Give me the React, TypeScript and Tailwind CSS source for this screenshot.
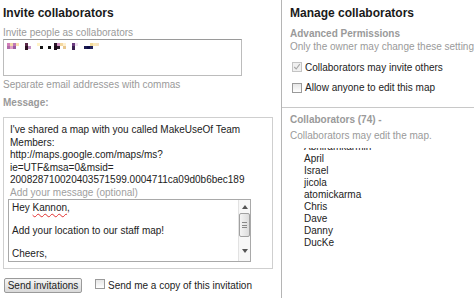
import React from "react";

const messageLines = [
  "I've shared a map with you called MakeUseOf Team",
  "Members:",
  "http://maps.google.com/maps/ms?",
  "ie=UTF&msa=0&msid=",
  "200828710020403571599.0004711ca09d0b6bec189",
];

const collaborators = ["Abhiramkarmin", "April", "Israel", "jicola", "atomickarma", "Chris", "Dave", "Danny", "DucKe", "Erin"];

// pixelated, redacted email address
const redacted: [number, number, number, number, string][] = [
  [2, 1, 3, 3, "#d27fb8"], [2, 4, 3, 3, "#b06aa8"], [5, 1, 3, 3, "#f2d9a8"], [5, 4, 3, 3, "#e0a0c8"], [8, 1, 3, 3, "#c078b8"], [8, 4, 3, 3, "#9a5aa0"], [11, 1, 3, 3, "#f8e0b0"],
  [20, 1, 3, 3, "#5a2848"], [20, 4, 3, 4, "#2a1020"], [23, 4, 3, 3, "#c090c0"],
  [32, 1, 3, 3, "#fff2c8"], [35, 4, 3, 3, "#151515"],
  [43, 4, 3, 3, "#101010"], [49, 1, 3, 3, "#2a1428"], [49, 4, 3, 4, "#1a0a18"], [52, 1, 3, 3, "#d090c0"], [52, 4, 3, 3, "#2a1a2a"], [55, 1, 3, 3, "#f4d8a0"], [58, 1, 3, 3, "#fff0d0"], [58, 4, 3, 3, "#e8c890"],
  [67, 1, 3, 3, "#6a3a80"], [67, 4, 3, 4, "#3a2050"], [70, 1, 3, 3, "#f0e0f0"],
  [79, 4, 3, 3, "#1a1a50"], [82, 4, 3, 3, "#0c0c48"], [85, 1, 3, 3, "#f0d898"], [85, 4, 3, 3, "#20205a"], [88, 1, 3, 3, "#fbe8b8"], [91, 1, 3, 3, "#f6e2c0"],
];

const Checkbox = ({ checked = false, disabled = false }: { checked?: boolean; disabled?: boolean }) => (
  <span
    className={`relative inline-block h-[10px] w-[10px] shrink-0 border ${
      disabled ? "border-[#c4c4c4] bg-[#f0f0f0]" : "border-[#9a9a9a] bg-gradient-to-b from-[#e6e6e6] to-white"
    }`}
  >
    {checked && (
      <svg viewBox="0 0 10 10" className="absolute left-0 top-0 h-[8px] w-[8px]">
        <path d="M1.5 5 L4 7.5 L8.5 1.5" fill="none" stroke="#a8a8a8" strokeWidth="1.4" />
      </svg>
    )}
  </span>
);

export default function App() {
  return (
    <div className="flex h-[298px] w-[474px] overflow-hidden bg-white font-['Liberation_Sans',Arial,sans-serif] text-[10px] text-[#333]">
      {/* invite */}
      <div className="w-[282px] shrink-0 border-r border-[#b5b5b5] pl-[3px]">
        <h2 className="pt-[6px] text-[12px] font-bold leading-[14px] text-[#1a1a1a]">Invite collaborators</h2>
        <p className="mt-[7px] leading-[12px] text-[#9a9a9a]">Invite people as collaborators</p>
        <div className="h-[37px] w-[239px] border border-[#bcbcbc] border-t-[#9a9a9a] pl-[1px] pt-[2px]">
          <svg width="96" height="9" viewBox="0 0 96 9">
            {redacted.map(([x, y, w, h, c], i) => (
              <rect key={i} x={x} y={y} width={w} height={h} fill={c} />
            ))}
          </svg>
        </div>
        <p className="mt-[3px] leading-[12px] text-[#9a9a9a]">Separate email addresses with commas</p>
        <p className="mt-[6px] font-bold leading-[12px] text-[#9a9a9a]">Message:</p>

        <div className="mt-[8px] h-[152px] w-[270px] border border-[#cfcfcf]">
          <div className="pl-[6px] pt-[6px] leading-[12.5px] text-[#222]">
            {messageLines.map((line) => (
              <div key={line} className="whitespace-nowrap">{line}</div>
            ))}
          </div>
          <p className="pl-[6px] leading-[12px] text-[#a0a0a0]">Add your message (optional)</p>
          <div className="ml-[4px] mt-[0.5px] flex h-[63px] w-[243px] border border-[#a9a9a9]">
            <div className="flex-1 pl-[3px] pt-[2px] leading-[11.5px] text-[#222]">
              <div>
                Hey <span className="underline decoration-[#e03030] decoration-wavy decoration-1 underline-offset-2">Kannon</span>,
              </div>
              <div>&nbsp;</div>
              <div>Add your location to our staff map!</div>
              <div>&nbsp;</div>
              <div>Cheers,</div>
            </div>
            <div className="flex w-[12px] flex-col items-center border-l border-[#e2e2e2] bg-[#f7f7f7]">
              <svg width="6" height="4" viewBox="0 0 6 4" className="mt-[5px]">
                <path d="M0 4 L3 0 L6 4 Z" fill="#555" />
              </svg>
              <div className="mt-[4px] flex h-[24px] w-[11px] flex-col items-center justify-center gap-[1.5px] rounded-[2px] border border-[#a0a0a0] bg-gradient-to-r from-[#f4f4f4] to-[#dcdcdc]">
                <span className="h-px w-[5px] bg-[#888]" />
                <span className="h-px w-[5px] bg-[#888]" />
                <span className="h-px w-[5px] bg-[#888]" />
              </div>
              <svg width="6" height="4" viewBox="0 0 6 4" className="mt-[12px]">
                <path d="M0 0 L3 4 L6 0 Z" fill="#555" />
              </svg>
            </div>
          </div>
        </div>

        <div className="mt-[9px] flex items-center">
          <button className="ml-[1px] h-[15px] w-[78px] rounded-[2px] border border-[#9a9a9a] bg-gradient-to-b from-[#f5f5f5] to-[#d9d9d9] text-[10px] leading-[13px] text-[#222]">
            Send invitations
          </button>
          <span className="ml-[13px]">
            <Checkbox />
          </span>
          <span className="ml-[3px] leading-[12px] text-[#222]">Send me a copy of this invitation</span>
        </div>
      </div>

      {/* manage */}
      <div className="flex-1">
        <div className="h-[108px] border-b border-[#c8c8c8] pl-[8px]">
          <h2 className="whitespace-nowrap pt-[6px] text-[12px] font-bold leading-[14px] text-[#1a1a1a]">Manage collaborators</h2>
          <p className="mt-[7px] whitespace-nowrap font-bold leading-[13px] text-[#9a9a9a]">Advanced Permissions</p>
          <p className="whitespace-nowrap leading-[13px] text-[#9a9a9a]">Only the owner may change these settings</p>
          <div className="ml-[2px] mt-[8px] flex h-[12px] items-center gap-[3px]">
            <Checkbox checked disabled />
            <span className="whitespace-nowrap text-[#222]">Collaborators may invite others</span>
          </div>
          <div className="ml-[2px] mt-[8.5px] flex h-[12px] items-center gap-[3px]">
            <Checkbox />
            <span className="whitespace-nowrap text-[#222]">Allow anyone to edit this map</span>
          </div>
        </div>
        <div className="pl-[8px]">
          <p className="pt-[6px] font-bold leading-[12px] text-[#9a9a9a]">Collaborators (74) -</p>
          <p className="mt-[4px] leading-[12px] text-[#9a9a9a]">Collaborators may edit the map.</p>
          <div className="mt-[6px] h-[98px] overflow-hidden pl-[14px]">
            <div className="-mt-[7px] leading-[12px] text-[#222]">
              {collaborators.map((name) => (
                <div key={name}>{name}</div>
              ))}
            </div>
          </div>
        </div>
      </div>
    </div>
  );
}
